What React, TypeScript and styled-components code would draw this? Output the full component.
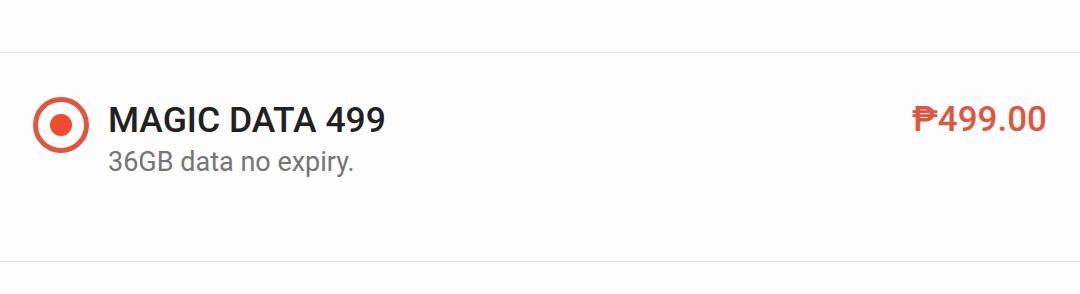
import React from 'react';
import styled, { createGlobalStyle } from 'styled-components';

const GlobalStyle = createGlobalStyle`
  html, body {
    margin: 0;
    padding: 0;
    background: #fdfdfd;
    font-family: Roboto, "Noto Sans", "Liberation Sans", sans-serif;
  }
`;

const plan = {
  name: 'MAGIC DATA 499',
  desc: '36GB data no expiry.',
  price: '₱499.00',
};

const App = () => {
  return (
    <>
      <GlobalStyle />
      <List>
        <Spacer />
        <PlanRow>
          <Radio $checked>
            <Dot />
          </Radio>
          <Info>
            <PlanName>{plan.name}</PlanName>
            <PlanDesc>{plan.desc}</PlanDesc>
          </Info>
          <Price>{plan.price}</Price>
        </PlanRow>
      </List>
    </>
  );
};

export default App;

const List = styled.section`
  width: 1080px;
  height: 294px;
  background: #fdfdfd;
  display: flex;
  flex-direction: column;
`;

const Spacer = styled.div`
  height: 52px;
  border-bottom: 1px solid #e6e6e6;
`;

const PlanRow = styled.article`
  height: 164px;
  display: flex;
  align-items: flex-start;
  padding: 44px 33px 0 33px;
  border-bottom: 1px solid #e6e6e6;
`;

const Radio = styled.span<{ $checked?: boolean }>`
  flex: none;
  width: 56px;
  height: 56px;
  box-sizing: border-box;
  border: 5px solid #e2553a;
  border-radius: 50%;
  display: flex;
  align-items: center;
  justify-content: center;
`;

const Dot = styled.span`
  width: 22px;
  height: 22px;
  border-radius: 50%;
  background: #f04b2d;
`;

const Info = styled.div`
  flex: 1;
  margin: 2px 0 0 19px;
  display: flex;
  flex-direction: column;
  gap: 5px;
`;

const PlanName = styled.h2`
  margin: 0;
  font-size: 35.5px;
  line-height: 42px;
  font-weight: 500;
  color: #212121;
`;

const PlanDesc = styled.p`
  margin: 0;
  font-size: 27px;
  line-height: 33px;
  font-weight: 400;
  color: #757575;
`;

const Price = styled.span`
  margin-top: 2px;
  font-size: 35px;
  line-height: 42px;
  font-weight: 500;
  color: #e2553a;
`;
